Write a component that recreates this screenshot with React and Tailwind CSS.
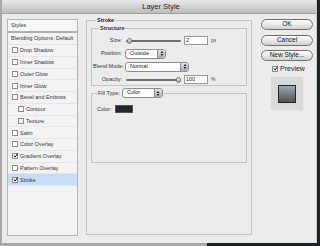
import React from 'react'

const font = { fontFamily: '"Liberation Sans", Arial, sans-serif' }

const Check = ({ checked }) => (
  <span className="w-[6px] h-[6px] border border-[#8a8a8a] bg-white flex items-center justify-center shrink-0">
    {checked && (
      <svg width="7" height="7" viewBox="0 0 7 7" className="-mt-[1px] -mr-[1px]">
        <path d="M1 3.5 L3 5.8 L6.5 0.5" stroke="#111" strokeWidth="1.4" fill="none" />
      </svg>
    )}
  </span>
)

const Select = ({ label, width }) => (
  <div className={`flex items-center h-[10px] bg-white border border-[#8c8c8c] rounded-[3px] overflow-hidden ${width}`}>
    <span className="flex-1 pl-[4px] text-[5.5px] leading-none text-[#222] whitespace-nowrap">{label}</span>
    <span className="w-[8px] h-full bg-gradient-to-b from-[#dfe3ea] to-[#a9b0bc] border-l border-[#8c8c8c] flex items-center justify-center">
      <svg width="4" height="7" viewBox="0 0 4 7">
        <path d="M0.5 3 L2 1 L3.5 3 Z M0.5 4 L2 6 L3.5 4 Z" fill="#222" />
      </svg>
    </span>
  </div>
)

const Slider = ({ thumbLeft }) => (
  <div className="relative w-[55px] h-[6px] flex items-center">
    <div className="w-full h-[2px] bg-[#6e6e6e] rounded-full" />
    <div
      className={`absolute top-[0px] w-[5px] h-[6px] rounded-full bg-gradient-to-b from-[#f4f4f4] to-[#9aa2ad] border border-[#7a7a7a] ${thumbLeft ? 'left-[1px]' : 'right-[0px]'}`}
    />
  </div>
)

const Field = ({ value, unit }) => (
  <div className="flex items-center gap-[3px]">
    <div className="w-[24px] h-[9px] bg-white border border-[#9a9a9a] text-[5.5px] leading-none pl-[1px] flex items-center text-[#222]">
      {value}
    </div>
    <span className="text-[5px] text-[#444]">{unit}</span>
  </div>
)

const Row = ({ label, children }) => (
  <div className="flex items-center h-[13px]">
    <span className="w-[32px] text-right pr-[3px] text-[5.5px] text-[#333] shrink-0 whitespace-nowrap">{label}</span>
    {children}
  </div>
)

const Button = ({ children }) => (
  <div className="h-[11px] rounded-full border border-[#6f6f6f] bg-gradient-to-b from-[#fdfdfd] via-[#e9e9e9] to-[#d0d0d0] flex items-center justify-center text-[6.5px] leading-none text-[#111] whitespace-nowrap">
    {children}
  </div>
)

const items = [
  { name: 'Drop Shadow' },
  { name: 'Inner Shadow' },
  { name: 'Outer Glow' },
  { name: 'Inner Glow' },
  { name: 'Bevel and Emboss' },
  { name: 'Contour', indent: true },
  { name: 'Texture', indent: true },
  { name: 'Satin' },
  { name: 'Color Overlay' },
  { name: 'Gradient Overlay', checked: true },
  { name: 'Pattern Overlay' },
  { name: 'Stroke', checked: true, active: true },
]

export default function App() {
  return (
    <div className="w-[320px] h-[246px] flex flex-col bg-[#1d2328] overflow-hidden" style={font}>
      <div className="flex h-[243px]">
        <div className="w-[317px] flex flex-col bg-[#ececec] border-l-2 border-[#a9a9a9] border-r border-r-[#c8c8c8]">
          {/* title bar */}
          <div className="h-[14px] shrink-0 bg-gradient-to-b from-[#e8e8e8] to-[#bdbdbd] border-b border-[#a0a0a0] flex items-center justify-center">
            <span className="text-[7.5px] text-[#222] pl-[4px]">Layer Style</span>
          </div>

          <div className="flex items-start pl-[5px] pt-[5px]">
            {/* styles list */}
            <div className="w-[71px] h-[217px] border border-[#b4b4b4] bg-[#f3f3f3] flex flex-col">
              <div className="h-[13px] flex items-center pl-[3px] text-[5.5px] text-[#333] bg-[#f7f7f7] border-b-2 border-[#b0b0b0]">
                Styles
              </div>
              <div className="h-[12px] flex items-center pl-[3px] text-[5.5px] text-[#333] border-b border-[#e2e2e2] whitespace-nowrap">
                Blending Options: Default
              </div>
              {items.map((it) => (
                <div
                  key={it.name}
                  className={`h-[11.75px] flex items-center gap-[2px] text-[5.5px] text-[#333] whitespace-nowrap border-b border-[#e6e6e6] ${it.indent ? 'pl-[10px]' : 'pl-[4px]'} ${it.active ? 'bg-[#c7dcf6]' : ''}`}
                >
                  <Check checked={it.checked} />
                  <span>{it.name}</span>
                </div>
              ))}
            </div>

            {/* settings panel */}
            <fieldset className="ml-[8px] -mt-[3px] w-[166px] h-[219px] border border-[#c2c2c2] px-[4px] pb-[4px]">
              <legend className="ml-[5px] px-[1px] text-[5.5px] font-bold text-[#222] leading-[8px]">Stroke</legend>

              <fieldset className="border border-[#c2c2c2] h-[62px] px-[1px]">
                <legend className="ml-[6px] px-[1px] text-[5.5px] font-bold text-[#333] leading-[8px]">Structure</legend>
                <div className="flex flex-col pt-[2px]">
                  <Row label="Size:">
                    <div className="flex items-center gap-[3px] pl-[1px]">
                      <Slider thumbLeft />
                      <Field value="2" unit="px" />
                    </div>
                  </Row>
                  <Row label="Position:">
                    <Select label="Outside" width="w-[41px]" />
                  </Row>
                  <Row label="Blend Mode:">
                    <Select label="Normal" width="w-[64px]" />
                  </Row>
                  <Row label="Opacity:">
                    <div className="flex items-center gap-[3px] pl-[1px]">
                      <Slider />
                      <Field value="100" unit="%" />
                    </div>
                  </Row>
                </div>
              </fieldset>

              <fieldset className="mt-[2px] border border-[#c2c2c2] h-[75px] px-[5px]">
                <legend className="ml-[0px] px-[1px] flex items-center gap-[2px]">
                  <span className="text-[5.5px] text-[#333] whitespace-nowrap">Fill Type:</span>
                  <Select label="Color" width="w-[41px]" />
                </legend>
                <div className="flex items-center gap-[3px] mt-[7px]">
                  <span className="text-[5.5px] text-[#333]">Color:</span>
                  <div className="w-[18px] h-[8px] bg-[#1f2830] border border-[#555]" />
                </div>
              </fieldset>
            </fieldset>

            {/* buttons */}
            <div className="ml-[9px] w-[52px] flex flex-col">
              <Button>OK</Button>
              <div className="mt-[5px]">
                <Button>Cancel</Button>
              </div>
              <div className="mt-[4px]">
                <Button>New Style...</Button>
              </div>
              <div className="mt-[4px] flex items-center gap-[2px] pl-[11px] h-[8px]">
                <Check checked />
                <span className="text-[7px] text-[#222]">Preview</span>
              </div>
              <div className="mt-[3px] ml-[9px] w-[34px] h-[35px] bg-[#d9d9d9] border border-[#e8e8e8] flex items-center justify-center">
                <div className="w-[18px] h-[18px] border border-[#222] bg-gradient-to-b from-[#a3a9b1] to-[#4d545c]" />
              </div>
            </div>
          </div>
        </div>
        <div className="flex-1 bg-[#1d2328]" />
      </div>
      <div className="h-[3px] flex">
        <div className="w-[207px] bg-[#a8a8a8]" />
        <div className="flex-1 bg-[#1d2328]" />
      </div>
    </div>
  )
}
